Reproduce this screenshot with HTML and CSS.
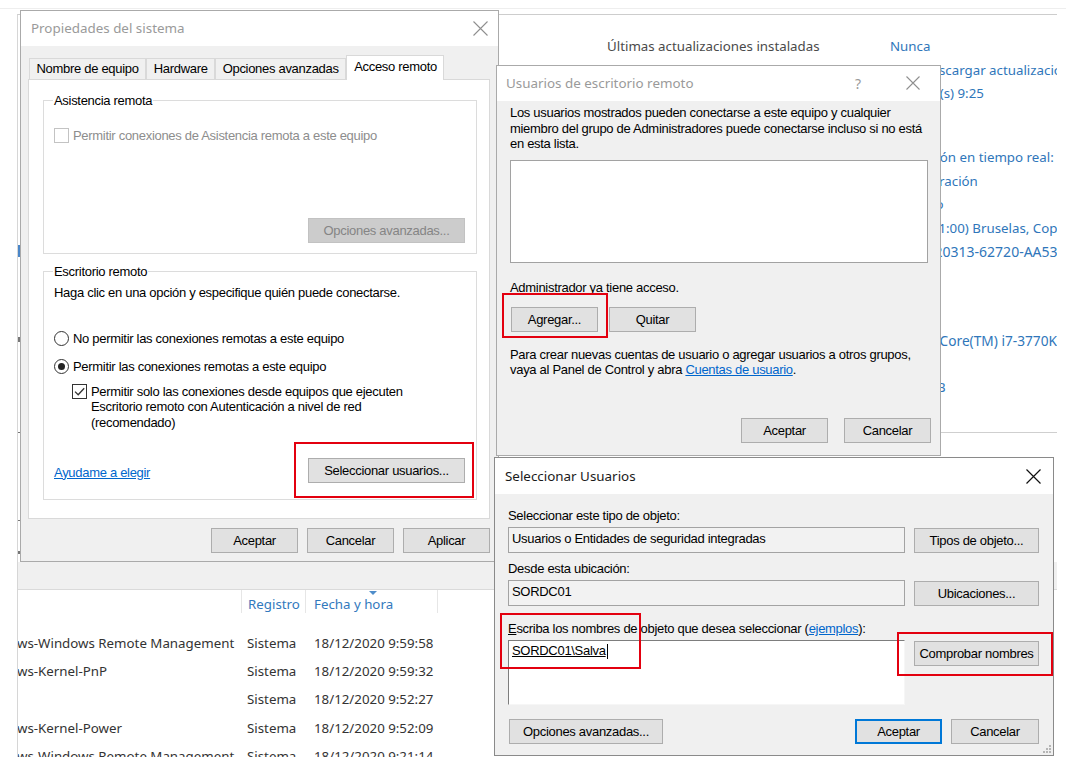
FILE: index.html
```html
<!DOCTYPE html>
<html lang="es">
<head>
<meta charset="utf-8">
<title>Escritorio remoto</title>
<link rel="stylesheet" href="styles.css">
</head>
<body>
<div class="desk">
  <div class="topline"></div>

  <div class="bgwin">
    <span class="mark m-blue"></span>
    <span class="mark m1"></span>
    <span class="mark m2"></span>
    <span class="mark m3"></span>
    <span class="mark m4"></span>
    <div class="props">
      <div class="sec sec1">
        <div class="prop-row"><span class="pl">Últimas actualizaciones instaladas</span><span class="pv">Nunca</span></div>
        <div class="prop-row"><span class="pl">Windows Update</span><span class="pv nudge-wu">Solo descargar actualizaciones mediante Windows Update</span></div>
        <div class="prop-row"><span class="pl">Última búsqueda de actualizaciones</span><span class="pv">Hoy a la(s) 9:25</span></div>
      </div>
      <div class="sec sec2">
        <div class="prop-row"><span class="pl">Antivirus de Windows Defender</span><span class="pv">Protección en tiempo real: activada</span></div>
        <div class="prop-row"><span class="pl">Comentarios y diagnóstico</span><span class="pv">Configuración</span></div>
        <div class="prop-row"><span class="pl">Configuración de seguridad mejorada de IE</span><span class="pv">Activado</span></div>
        <div class="prop-row"><span class="pl">Zona horaria</span><span class="pv nudge-tz">(UTC+01:00) Bruselas, Copenhague, Madrid, París</span></div>
        <div class="prop-row"><span class="pl">Id. del producto</span><span class="pv wide">00431-20313-62720-AA535</span></div>
      </div>
      <div class="sec sec3">
        <div class="prop-row"><span class="pl">Procesadores</span><span class="pv cpu">Intel(R) Core(TM) i7-3770K CPU @ 3.50GHz</span></div>
        <div class="prop-row"><span class="pl">Memoria instalada (RAM)</span><span class="pv">4 GB</span></div>
        <div class="prop-row"><span class="pl">Espacio total en disco</span><span class="pv">59,45 GB</span></div>
      </div>
      <div class="sep"></div>
    </div>
    <div class="band"></div>
    <div class="thead">
      <div class="th c1"></div>
      <div class="th c2">Registro</div>
      <div class="th c3"><span class="sortarrow"></span>Fecha y hora</div>
    </div>
    <div class="tbody">
      <div class="tr"><span class="td c1">ws-Windows Remote Management</span><span class="td c2">Sistema</span><span class="td c3">18/12/2020 9:59:58</span></div>
      <div class="tr"><span class="td c1">ws-Kernel-PnP</span><span class="td c2">Sistema</span><span class="td c3">18/12/2020 9:59:32</span></div>
      <div class="tr"><span class="td c1"></span><span class="td c2">Sistema</span><span class="td c3">18/12/2020 9:52:27</span></div>
      <div class="tr"><span class="td c1">ws-Kernel-Power</span><span class="td c2">Sistema</span><span class="td c3">18/12/2020 9:52:09</span></div>
      <div class="tr"><span class="td c1">ws-Windows Remote Management</span><span class="td c2">Sistema</span><span class="td c3">18/12/2020 9:21:14</span></div>
    </div>
  </div>

  <!-- Propiedades del sistema -->
  <div class="win win1">
    <div class="titlebar tb1">
      <span class="title">Propiedades del sistema</span>
      <svg class="xicon" width="15" height="15" viewBox="0 0 15 15"><path d="M0.5 0.5L14.5 14.5M14.5 0.5L0.5 14.5" stroke="currentColor" stroke-width="1.1" fill="none"/></svg>
    </div>
    <div class="wbody w1body">
      <div class="tabs">
        <div class="tab">Nombre de equipo</div>
        <div class="tab">Hardware</div>
        <div class="tab">Opciones avanzadas</div>
        <div class="tab sel">Acceso remoto</div>
      </div>
      <div class="panel">
        <div class="group g1">
          <span class="legend">Asistencia remota</span>
          <div class="optrow dis">
            <span class="chk dis"></span>
            <span>Permitir conexiones de Asistencia remota a este equipo</span>
          </div>
          <div class="g1foot"><button class="btn btn-wide dis">Opciones avanzadas...</button></div>
        </div>
        <div class="group g2">
          <span class="legend">Escritorio remoto</span>
          <div class="hint">Haga clic en una opción y especifique quién puede conectarse.</div>
          <div class="optrow r1"><span class="radio"></span><span>No permitir las conexiones remotas a este equipo</span></div>
          <div class="optrow r2"><span class="radio on"></span><span>Permitir las conexiones remotas a este equipo</span></div>
          <div class="optrow nla">
            <svg class="chkbox" width="15" height="15" viewBox="0 0 15 15"><rect x="0.5" y="0.5" width="14" height="14" fill="#fff" stroke="#333"/><path d="M3 7.6L6.2 10.8L12.2 4.2" stroke="#333" stroke-width="1.3" fill="none"/></svg>
            <span class="multi">Permitir solo las conexiones desde equipos que ejecuten<br>Escritorio remoto con Autenticación a nivel de red<br>(recomendado)</span>
          </div>
          <div class="g2foot">
            <a class="link" href="#">Ayudame a elegir</a>
            <button class="btn btn-wide">Seleccionar usuarios...</button>
          </div>
        </div>
      </div>
      <div class="footer">
        <button class="btn">Aceptar</button>
        <button class="btn">Cancelar</button>
        <button class="btn">Aplicar</button>
      </div>
    </div>
    <div class="redbox rb-sel"></div>
  </div>

  <!-- Usuarios de escritorio remoto -->
  <div class="win win2">
    <div class="titlebar tb2">
      <span class="title">Usuarios de escritorio remoto</span>
      <span class="help">?</span>
      <svg class="xicon" width="14" height="14" viewBox="0 0 14 14"><path d="M0.5 0.5L13.5 13.5M13.5 0.5L0.5 13.5" stroke="currentColor" stroke-width="1.1" fill="none"/></svg>
    </div>
    <div class="wbody w2body">
      <p class="para">Los usuarios mostrados pueden conectarse a este equipo y cualquier<br>miembro del grupo de Administradores puede conectarse incluso si no está<br>en esta lista.</p>
      <div class="listbox"></div>
      <div class="admin">Administrador ya tiene acceso.</div>
      <div class="btnrow">
        <button class="btn">Agregar...</button>
        <button class="btn">Quitar</button>
      </div>
      <p class="para para2">Para crear nuevas cuentas de usuario o agregar usuarios a otros grupos,<br>vaya al Panel de Control y abra <a class="link" href="#">Cuentas de usuario</a>.</p>
      <div class="footer f2">
        <button class="btn">Aceptar</button>
        <button class="btn">Cancelar</button>
      </div>
    </div>
    <div class="redbox rb-add"></div>
  </div>

  <!-- Seleccionar Usuarios -->
  <div class="win win3">
    <div class="titlebar tb3">
      <span class="title">Seleccionar Usuarios</span>
      <svg class="xicon" width="15" height="15" viewBox="0 0 15 15"><path d="M0.5 0.5L14.5 14.5M14.5 0.5L0.5 14.5" stroke="currentColor" stroke-width="1.2" fill="none"/></svg>
    </div>
    <div class="wbody w3body">
      <div class="lbl l1">Seleccionar este tipo de objeto:</div>
      <div class="frow">
        <div class="field">Usuarios o Entidades de seguridad integradas</div>
        <button class="btn">Tipos de objeto...</button>
      </div>
      <div class="lbl l2">Desde esta ubicación:</div>
      <div class="frow">
        <div class="field">SORDC01</div>
        <button class="btn">Ubicaciones...</button>
      </div>
      <div class="lbl l3"><u>E</u>scriba los nombres de objeto que desea seleccionar (<a class="link" href="#">ejemplos</a>):</div>
      <div class="frow top">
        <div class="textarea"><span class="typed">SORDC01\Salva</span><span class="caret"></span></div>
        <button class="btn btn-check">Comprobar nombres</button>
      </div>
      <div class="footer f3">
        <button class="btn btn-adv">Opciones avanzadas...</button>
        <span class="grow"></span>
        <button class="btn default">Aceptar</button>
        <button class="btn btn-cancel">Cancelar</button>
      </div>
    </div>
    <svg class="grip" width="10" height="10" viewBox="0 0 10 10">
      <rect x="8" y="2" width="2" height="2" fill="#b5b5b5"/>
      <rect x="5" y="5" width="2" height="2" fill="#b5b5b5"/>
      <rect x="8" y="5" width="2" height="2" fill="#b5b5b5"/>
      <rect x="2" y="8" width="2" height="2" fill="#b5b5b5"/>
      <rect x="5" y="8" width="2" height="2" fill="#b5b5b5"/>
      <rect x="8" y="8" width="2" height="2" fill="#b5b5b5"/>
    </svg>
    <div class="redbox rb-name"></div>
    <div class="redbox rb-check"></div>
  </div>
</div>
</body>
</html>
```

FILE: styles.css
```css
* { box-sizing: border-box; }
html, body { margin: 0; padding: 0; background: #fff; }
body { font-family: "Liberation Sans", Arial, sans-serif; }

.desk {
  position: relative;
  width: 1066px;
  height: 770px;
  overflow: hidden;
  background: #fff;
}
.topline { height: 9px; border-bottom: 1px solid #eeeeee; }

/* ---------- background window (server manager) ---------- */
.bgwin {
  position: absolute;
  left: 17px;
  top: 14px;
  width: 1040px;
  height: 743px;
  border-top: 1px solid #cdcdcd;
  border-left: 1px solid #d6d6d6;
  overflow: hidden;
  display: flex;
  flex-direction: column;
  font-family: "Noto Sans", "Open Sans", sans-serif;
  font-size: 13.3px;
  color: #4a4a4a;
}
.mark { position: absolute; left: 0; width: 2px; background: #777; }
.m-blue { top: 230px; height: 12px; background: #4a86c8; width: 2px; }
.m1 { top: 322px; height: 5px; }
.m2 { top: 417px; height: 1px; }
.m3 { top: 505px; height: 1px; }
.m4 { top: 536px; height: 3px; }

.props {
  height: 547px;
  flex: none;
  padding: 20px 0 0 589px;
}
.sec2 { margin-top: 40.5px; }
.sec3 { margin-top: 65.5px; }
.prop-row {
  display: grid;
  grid-template-columns: 283px 1fr;
  line-height: 23.5px;
  white-space: nowrap;
}
.pv { color: #2f76ba; }
.pv.wide { font-size: 14px; }
.pv.cpu { font-size: 13.7px; }
.nudge-wu { padding-left: 3px; }
.nudge-tz { padding-left: 4px; }
.sep { margin: 32px 0 0 -100px; border-top: 1px solid #cfcfcf; }

.band {
  flex: none;
  height: 28px;
  background: #f0f0f0;
  border-bottom: 1px solid #dadada;
}
.thead, .tr {
  display: grid;
  grid-template-columns: 224px 64px 132px;
  white-space: nowrap;
}
.thead { height: 23px; flex: none; }
.th {
  position: relative;
  border-right: 1px solid #e6e6e6;
  color: #3279bd;
  padding-top: 5px;
  line-height: 18px;
}
.c2 { padding-left: 6px; }
.c3 { padding-left: 8px; }
.td.c1 { margin-left: -1px; }
.td.c2 { padding-left: 5px; }
.sortarrow {
  position: absolute;
  left: 63px;
  top: 1px;
  width: 0;
  height: 0;
  border-left: 4px solid transparent;
  border-right: 4px solid transparent;
  border-top: 4px solid #4f8dca;
}
.tbody { margin-top: 16px; color: #333; }
.tr { line-height: 28.2px; }

/* ---------- generic window ---------- */
.win {
  position: absolute;
  display: flex;
  flex-direction: column;
  background: #f0f0f0;
  border: 1px solid #aaaaaa;
  font-family: "Liberation Sans", Arial, sans-serif;
  font-size: 13px;
  letter-spacing: -0.3px;
  color: #000;
}
.titlebar {
  flex: none;
  display: flex;
  align-items: center;
  background: #fff;
  font-family: "Noto Sans", "Open Sans", sans-serif;
  font-size: 13.4px;
  letter-spacing: 0;
  color: #9a9a9a;
}
.title { flex: 1; white-space: nowrap; }
.xicon { flex: none; display: block; color: #8f8f8f; }
.wbody { flex: 1; display: flex; flex-direction: column; min-height: 0; }

.btn {
  font: inherit;
  letter-spacing: inherit;
  color: #000;
  background: #e1e1e1;
  border: 1px solid #adadad;
  height: 25px;
  width: 87px;
  padding: 0;
  margin: 0;
  text-align: center;
  flex: none;
}
.btn.dis { background: #cccccc; border-color: #c2c2c2; color: #858585; }
.btn.default { border-color: #0078d7; box-shadow: inset 0 0 0 1px #0078d7; }
.btn-wide { width: 157px; }
.link { color: #0066cc; text-decoration: underline; }
.redbox {
  position: absolute;
  border: 2px solid #e3000f;
}

/* ---------- window 1 ---------- */
.win1 { left: 20px; top: 10px; width: 479px; height: 552px; }
.tb1 { height: 35px; padding: 0 10px 1px 10px; }
.w1body { padding: 9px 8px 0 7px; }
.tabs { display: flex; align-items: flex-end; height: 24px; padding-left: 1px; flex: none; }
.tab {
  height: 21px;
  line-height: 20px;
  padding: 0 6.5px;
  border: 1px solid #d9d9d9;
  border-bottom: none;
  background: #f0f0f0;
  white-space: nowrap;
}
.tab.sel {
  height: 25px;
  margin-bottom: -1px;
  line-height: 22px;
  padding: 0 6px 0 7px;
  background: #fff;
  position: relative;
  z-index: 1;
}
.panel {
  flex: none;
  height: 440px;
  background: #fff;
  border: 1px solid #d9d9d9;
  padding: 20px 12px 18px 14px;
  display: flex;
  flex-direction: column;
}
.group {
  position: relative;
  border: 1px solid #dcdcdc;
  display: flex;
  flex-direction: column;
  flex: none;
}
.legend {
  position: absolute;
  left: 9px;
  top: -8px;
  padding: 0 1px;
  background: #fff;
  line-height: 15px;
  white-space: nowrap;
}
.g1 { height: 154px; padding: 27px 11px 10px 10px; }
.g2 { height: 229px; margin-top: 17px; padding: 13px 11px 16px 10px; }
.optrow { display: flex; align-items: center; gap: 4px; line-height: 15px; white-space: nowrap; }
.optrow.dis { color: #8d8d8d; }
.chk { width: 15px; height: 15px; border: 1px solid #333; background: #fff; flex: none; }
.chk.dis { border-color: #c3c3c3; }
.g1foot { margin-top: auto; display: flex; justify-content: flex-end; }
.hint { line-height: 15px; white-space: nowrap; }
.radio {
  width: 15px; height: 15px; flex: none;
  border: 1px solid #333; border-radius: 50%; background: #fff;
  display: flex; align-items: center; justify-content: center;
}
.radio.on::after { content: ""; width: 7px; height: 7px; border-radius: 50%; background: #222; }
.r1 { margin-top: 31px; }
.r2 { margin-top: 13px; }
.nla { margin-top: 10px; margin-left: 18px; align-items: flex-start; }
.chkbox { flex: none; display: block; }
.multi { line-height: 15.5px; margin-top: -0.5px; }
.g2foot { margin-top: auto; display: flex; justify-content: space-between; align-items: center; }
.g2foot .link { margin-top: 3px; }
.footer { display: flex; justify-content: flex-end; gap: 9px; flex: none; }
.w1body .footer { margin-top: 9px; }
.rb-sel { left: 273px; top: 431px; width: 180px; height: 56px; }

/* ---------- window 2 ---------- */
.win2 { left: 496px; top: 65px; width: 445px; height: 391px; }
.tb2 { height: 35px; padding: 0 20px 1px 9px; }
.help { margin-right: 45px; font-size: 14px; color: #9a9a9a; }
.w2body { padding: 4px 9px 12px 13px; }
.para { margin: 0; line-height: 15.5px; white-space: nowrap; }
.listbox { margin-top: 8px; height: 103px; width: 418px; background: #fff; border: 1px solid #a2a2a2; flex: none; }
.admin { margin-top: 17px; line-height: 15px; }
.btnrow { display: flex; gap: 11px; margin-top: 12px; padding-left: 1px; }
.para2 { margin-top: 15px; }
.f2 { margin-top: auto; gap: 16px; }
.rb-add { left: 5px; top: 227px; width: 106px; height: 45px; }

/* ---------- window 3 ---------- */
.win3 { left: 494px; top: 457px; width: 560px; height: 299px; border-color: #8a8a8a; }
.tb3 { height: 36px; padding: 0 12px 0 10px; color: #1a1a1a; }
.tb3 .xicon { color: #111; }
.w3body { padding: 14px 14px 11px 13px; }
.lbl { line-height: 15px; white-space: nowrap; }
.frow { display: grid; grid-template-columns: 1fr 125px; column-gap: 9px; align-items: center; margin-top: 4px; }
.frow .btn { width: 125px; }
.frow.top { align-items: start; }
.field {
  height: 26px;
  line-height: 22px;
  padding-left: 3px;
  background: #f2f2f2;
  border: 1px solid #a3a3a3;
  white-space: nowrap;
}
.l2 { margin-top: 8px; }
.l3 { margin-top: 15px; }
.textarea {
  height: 65px;
  background: #fff;
  border-left: 1px solid #7d7d7d;
  border-top: 1px solid #7d7d7d;
  border-right: 1px solid #f6f6f6;
  border-bottom: 1px solid #f6f6f6;
  padding: 2px 0 0 3px;
  line-height: 16px;
  display: flex;
  align-items: flex-start;
}
.typed { text-decoration: underline; }
.caret { width: 1px; height: 15px; background: #000; margin-left: 1px; margin-top: 1px; }
.btn-check { margin-top: 1px; }
.f3 { margin-top: auto; gap: 0; padding-left: 1px; }
.grow { flex: 1; }
.btn-adv { width: 154px; }
.f3 .default { width: 87px; margin-right: 9px; }
.btn-cancel { width: 88px; }
.grip { position: absolute; right: 2px; bottom: 2px; display: block; }
.rb-name { left: 5px; top: 155px; width: 141px; height: 56px; }
.rb-check { left: 402px; top: 174px; width: 156px; height: 44px; }
```
